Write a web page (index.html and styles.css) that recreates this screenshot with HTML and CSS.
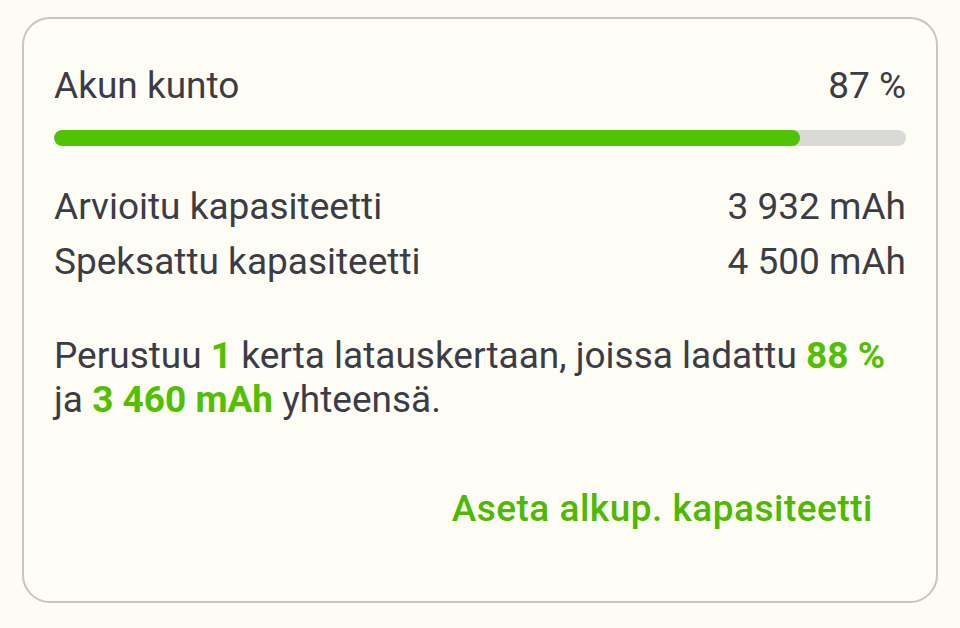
FILE: index.html
```html
<!DOCTYPE html>
<html lang="fi">
<head>
<meta charset="utf-8">
<title>Akun kunto</title>
<link rel="stylesheet" href="styles.css">
</head>
<body>
<section class="card">
  <div class="row head">
    <span>Akun kunto</span>
    <span>87&nbsp;%</span>
  </div>
  <div class="bar"><div class="fill" style="width: 87.5%"></div></div>
  <div class="stats">
    <div class="row"><span>Arvioitu kapasiteetti</span><span>3&nbsp;932&nbsp;mAh</span></div>
    <div class="row"><span>Speksattu kapasiteetti</span><span>4&nbsp;500&nbsp;mAh</span></div>
  </div>
  <p class="note">Perustuu <b>1</b> kerta latauskertaan, joissa ladattu <b>88&nbsp;%</b> ja <b>3&nbsp;460&nbsp;mAh</b> yhteensä.</p>
  <div class="actions"><button class="link">Aseta alkup. kapasiteetti</button></div>
</section>
</body>
</html>
```
FILE: styles.css
```css
html, body {
  margin: 0;
  background: #fcfcf4;
}
body {
  padding: 17px 22px 0 22px;
  font-family: Roboto, "Noto Sans", sans-serif;
  color: #3c3c44;
}
.card {
  box-sizing: border-box;
  width: 916px;
  height: 586px;
  border: 2px solid #c6c6be;
  border-radius: 28px;
  padding: 0 30px;
  background: #fdfdf6;
}
.row {
  display: flex;
  justify-content: space-between;
  font-size: 37px;
}
.head {
  margin-top: 45px;
  line-height: 44px;
}
.bar {
  margin-top: 22px;
  height: 16px;
  border-radius: 8px;
  background: #d9d9d7;
  overflow: hidden;
}
.fill {
  height: 100%;
  border-radius: 8px;
  background: #4fc300;
}
.stats {
  margin-top: 33px;
}
.stats .row {
  line-height: 55px;
}
.note {
  margin: 45px 0 0;
  font-size: 37px;
  line-height: 44px;
}
.note b {
  color: #52c000;
  font-weight: 700;
}
.actions {
  display: flex;
  justify-content: flex-end;
  margin-top: 65px;
  padding-right: 33px;
}
.link {
  border: 0;
  background: none;
  padding: 0;
  font: 500 37px/44px Roboto, sans-serif;
  letter-spacing: 0.5px;
  color: #4fb800;
}
```
